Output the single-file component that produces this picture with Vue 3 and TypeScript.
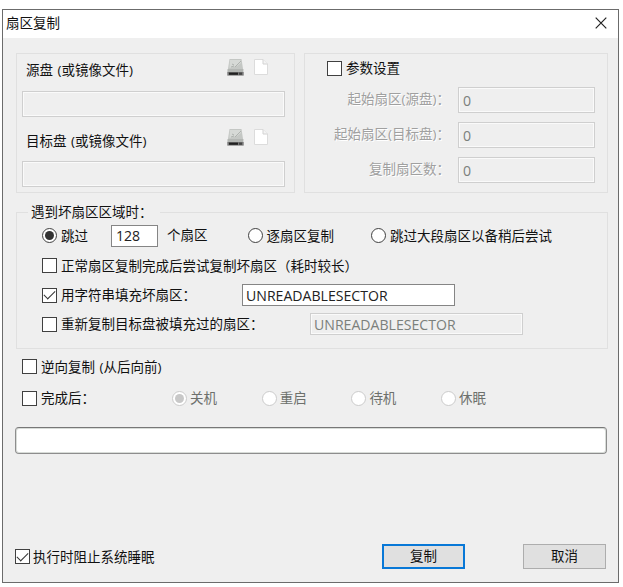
<script setup lang="ts">
import { ref, reactive } from 'vue'

interface PathField { label: string; value: string }
interface NumField { label: string; value: string }

const paths = reactive<PathField[]>([
  { label: '源盘 (或镜像文件)', value: '' },
  { label: '目标盘 (或镜像文件)', value: '' },
])
const params = reactive<NumField[]>([
  { label: '起始扇区(源盘)：', value: '0' },
  { label: '起始扇区(目标盘)：', value: '0' },
  { label: '复制扇区数：', value: '0' },
])
const afterOptions = ['关机', '重启', '待机', '休眠']

const useParams = ref(false)
const mode = ref('skip')
const skipCount = ref('128')
const retryBad = ref(false)
const fillBad = ref(true)
const fillText = ref('UNREADABLESECTOR')
const recopy = ref(false)
const recopyText = ref('UNREADABLESECTOR')
const reverse = ref(false)
const whenDone = ref(false)
const afterAction = ref('关机')
const keepAwake = ref(true)
</script>

<template>
  <div class="page">
    <main class="dialog">
      <header class="titlebar">
        <span>扇区复制</span>
        <svg class="close" viewBox="0 0 12 12"><path d="M.7.7 11.3 11.3M11.3.7.7 11.3" /></svg>
      </header>

      <div class="top">
        <section class="group sources">
          <div v-for="p in paths" :key="p.label" class="source">
            <div class="source-head">
              <span class="source-label">{{ p.label }}</span>
              <svg class="disk" viewBox="0 0 17 17">
                <path d="M2.5 0h12l1.7 11H.8z" fill="#c4c7c4" />
                <path d="M3 1h10.5l.5 3-4 3-7.5 2z" fill="#d6d9d6" />
                <path d="M5 5l2 1M8 8l6-6M4 8l3-1" stroke="#aeb2ae" stroke-width="1" fill="none" />
                <path d="M.6 10h15.8v3H.4z" fill="#b3b6b3" />
                <path d="M.3 13h16.4v3.6H.3z" fill="#777" />
                <path d="M2 13.6h9v2.2H2z" fill="#202020" />
                <path d="M12 13.6h3v2.2h-3z" fill="#444" />
              </svg>
              <svg class="file" viewBox="0 0 14 16">
                <path d="M.5.5H9L13.5 5v10.5H.5z" fill="#fff" stroke="#dcdcdc" />
                <path d="M9 .5V5h4.5" fill="#f4f4f4" stroke="#d2d2d2" />
              </svg>
            </div>
            <input v-model="p.value" class="field off path" disabled />
          </div>
        </section>

        <section class="group params">
          <label class="opt"><input v-model="useParams" type="checkbox" class="check" />参数设置</label>
          <div class="param-grid">
            <template v-for="p in params" :key="p.label">
              <span class="etched">{{ p.label }}</span>
              <input v-model="p.value" class="field off num" disabled />
            </template>
          </div>
        </section>
      </div>

      <section class="group bad">
        <span class="legend">遇到坏扇区区域时：</span>
        <div class="row">
          <label class="opt"><input v-model="mode" type="radio" value="skip" class="radio" />跳过</label>
          <input v-model="skipCount" class="field count" />
          <span class="unit">个扇区</span>
          <label class="opt each"><input v-model="mode" type="radio" value="each" class="radio" />逐扇区复制</label>
          <label class="opt later"><input v-model="mode" type="radio" value="later" class="radio" />跳过大段扇区以备稍后尝试</label>
        </div>
        <div class="row">
          <label class="opt"><input v-model="retryBad" type="checkbox" class="check" />正常扇区复制完成后尝试复制坏扇区（耗时较长）</label>
        </div>
        <div class="row">
          <label class="opt fill-opt"><input v-model="fillBad" type="checkbox" class="check" />用字符串填充坏扇区：</label>
          <input v-model="fillText" class="field text" />
        </div>
        <div class="row">
          <label class="opt recopy-opt"><input v-model="recopy" type="checkbox" class="check" />重新复制目标盘被填充过的扇区：</label>
          <input v-model="recopyText" class="field off text" disabled />
        </div>
      </section>

      <section class="after">
        <div class="after-row">
          <label class="opt"><input v-model="reverse" type="checkbox" class="check" />逆向复制 (从后向前)</label>
        </div>
        <div class="after-row">
          <label class="opt done-opt"><input v-model="whenDone" type="checkbox" class="check" />完成后：</label>
          <label v-for="o in afterOptions" :key="o" class="opt action">
            <input v-model="afterAction" type="radio" :value="o" class="radio" disabled />{{ o }}
          </label>
        </div>
      </section>

      <div class="progress"></div>

      <footer class="footer">
        <label class="opt"><input v-model="keepAwake" type="checkbox" class="check" />执行时阻止系统睡眠</label>
        <button class="btn primary">复制</button>
        <button class="btn">取消</button>
      </footer>
    </main>
  </div>
</template>

<style>
body {
  margin: 0;
  background: #fff;
}
</style>

<style scoped>
.page {
  box-sizing: border-box;
  width: 623px;
  height: 587px;
  padding: 9px 0 0 2px;
  background: #fff;
  overflow: hidden;
}
.page * {
  box-sizing: border-box;
}
.dialog {
  display: flex;
  flex-direction: column;
  width: 617px;
  height: 574px;
  border: 1px solid #6b6b6b;
  background: #efefef;
  color: #111;
  font-family: "Open Sans", "Noto Sans CJK SC", sans-serif;
  font-size: 13.5px;
  line-height: 18px;
  white-space: nowrap;
}
.titlebar {
  display: flex;
  justify-content: space-between;
  align-items: center;
  height: 28px;
  padding: 0 11px 2px 3px;
  background: #fff;
}
.close {
  width: 12px;
  height: 12px;
}
.close path {
  fill: none;
  stroke: #222;
  stroke-width: 1.2;
}
.top {
  display: flex;
  gap: 9px;
  padding: 15px 0 0 13px;
}
.group {
  border: 1px solid #e0e0e0;
}
.sources {
  width: 279px;
  height: 140px;
  padding: 5px 0 0 5px;
}
.source {
  height: 70px;
}
.source-head {
  display: flex;
  height: 32px;
  padding-left: 4px;
}
.source-label {
  width: 201px;
  padding-top: 2px;
  word-spacing: 1px;
}
.source + .source .source-label {
  padding-top: 3px;
}
.disk {
  width: 17px;
  height: 17px;
  margin-right: 10px;
}
.file {
  width: 14px;
  height: 16px;
}
.field {
  display: block;
  height: 22px;
  margin: 0;
  padding: 0 3px;
  border: 1px solid #858585;
  border-radius: 0;
  outline: none;
  background: #fff;
  color: #222;
  font: inherit;
  font-size: 14.1px;
}
.field.off {
  border-color: #cfcfcf;
  background: #efefef;
  box-shadow: inset 0 0 0 1px #fafafa;
  color: #7b807c;
  opacity: 1;
}
.field.path {
  width: 263px;
  height: 26px;
}
.params {
  width: 304px;
  height: 140px;
  padding: 5px 0 0 22px;
}
.opt {
  display: flex;
  align-items: center;
  gap: 4px;
}
.check,
.radio {
  appearance: none;
  flex: none;
  display: grid;
  place-items: center;
  width: 15px;
  height: 15px;
  margin: 0;
  border: 1px solid #404040;
  background: #fff;
}
.radio {
  border-radius: 50%;
}
.check:checked::after {
  content: "";
  width: 10px;
  height: 5px;
  border: solid #333;
  border-width: 0 0 1.4px 1.4px;
  transform: translateY(-1.5px) rotate(-45deg);
}
.radio:checked::after {
  content: "";
  width: 9px;
  height: 9px;
  border-radius: 50%;
  background: #333;
}
.radio:disabled {
  border-color: #cbcbcb;
}
.radio:disabled:checked::after {
  background: #c8c8c8;
}
.param-grid {
  display: grid;
  grid-template-columns: 123px 137px;
  grid-auto-rows: 26px;
  row-gap: 9px;
  column-gap: 8px;
  align-items: center;
  padding-top: 10px;
}
.etched {
  justify-self: end;
  padding-bottom: 3px;
  color: #a0a0a0;
  text-shadow: 1px 1px 0 #fff;
}
.field.num {
  height: 26px;
  padding-left: 4px;
}
.bad {
  display: flex;
  flex-direction: column;
  width: 592px;
  height: 137px;
  margin: 19px 0 0 13px;
  padding-left: 25px;
}
.legend {
  width: 132px;
  height: 17px;
  margin: -10px 0 0 -14px;
  padding-left: 3px;
  background: #efefef;
}
.row {
  display: flex;
  align-items: center;
  height: 29.4px;
}
.row:nth-child(2) {
  height: 31px;
}
.field.count {
  width: 47px;
  margin-left: 23px;
  padding-left: 4px;
}
.unit {
  margin: -2px 0 0 9px;
}
.each {
  margin-left: 40px;
}
.later {
  margin-left: 37px;
}
.opt.fill-opt {
  width: 200px;
}
.opt.recopy-opt {
  width: 268px;
}
.text {
  width: 213px;
}
.after {
  padding: 2px 0 0 19px;
}
.after-row {
  display: flex;
  height: 31.5px;
  word-spacing: 1px;
}
.opt.done-opt {
  width: 150px;
}
.opt.action {
  gap: 3px;
  width: 89.7px;
  color: #6d706c;
}
.progress {
  width: 592px;
  height: 27px;
  margin: 13px 0 0 12px;
  border: 1px solid #8d8d8d;
  border-top-color: #777;
  border-radius: 4px;
  background: #fff;
  box-shadow: inset 0 0 0 1px #d8dcd8;
}
.footer {
  display: flex;
  align-items: center;
  height: 25px;
  margin: auto 12px 13px 12px;
}
.footer .opt {
  gap: 3px;
}
.btn {
  width: 83px;
  height: 25px;
  margin-left: 58px;
  padding: 0 0 1px;
  border: 1px solid #adadad;
  background: #e0e0e0;
  color: #111;
  font: inherit;
}
.btn.primary {
  margin-left: auto;
  border: 2px solid #0878d7;
}
</style>
